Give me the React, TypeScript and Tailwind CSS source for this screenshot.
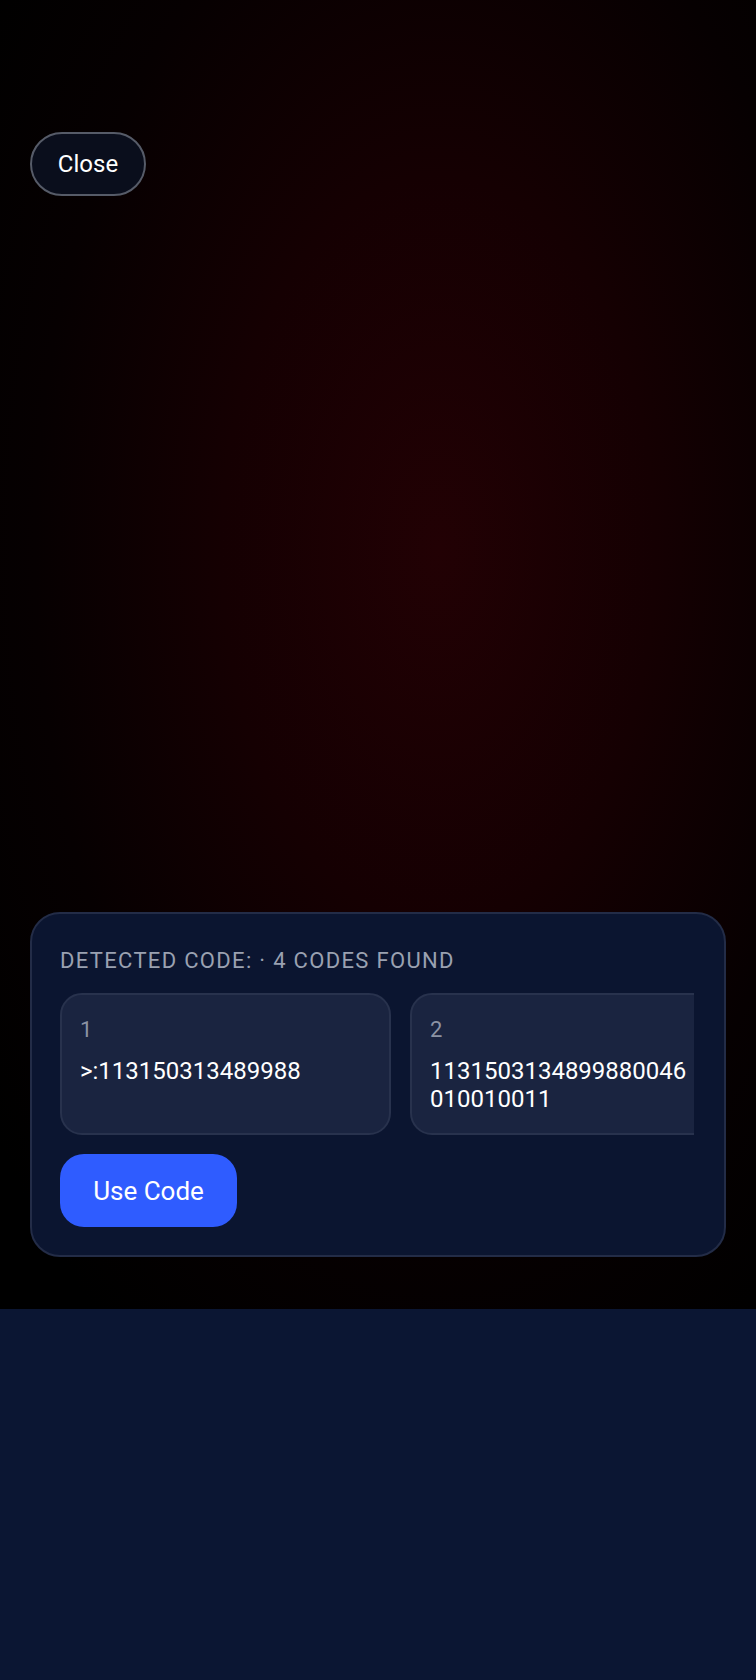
import React from "react";

export default function App() {
  return (
    <div className="w-[756px] h-[1680px] flex flex-col bg-[#0b1633]" style={{ fontFamily: "Roboto, 'Noto Sans', sans-serif" }}>
      <div className="h-[1309px] flex flex-col px-[30px] pt-[132px] pb-[52px] bg-[radial-gradient(ellipse_at_58%_42%,#220104_0%,#150002_35%,#060001_65%,#000000_90%)]">
        <button className="self-start w-[116px] h-[64px] rounded-full border-2 border-[#565b68] bg-[#0a0e1c] text-white text-[24px] leading-none">
          Close
        </button>
        <div className="mt-auto rounded-[30px] border-2 border-[#232c47] bg-[#0b1530] pl-[28px] pr-[30px] pt-[36px] pb-[28px]">
          <div className="text-[22px] leading-none tracking-[0.06em] text-[#9aa1b1]">
            DETECTED CODE: · 4 CODES FOUND
          </div>
          <div className="mt-[21px] flex gap-[19px] overflow-hidden">
            {[
              { n: "1", code: ">:113150313489988" },
              { n: "2", code: "1131503134899880046010010011" },
            ].map((t) => (
              <div
                key={t.n}
                className="shrink-0 w-[331px] h-[142px] rounded-[22px] border-2 border-[#28324d] bg-[#1a2440] pl-[18px] pt-[22px]"
              >
                <div className="text-[22px] leading-[26px] text-[#8c93a4]">{t.n}</div>
                <div className="mt-[14px] w-[262px] break-all text-[24px] leading-[28px] text-white">{t.code}</div>
              </div>
            ))}
          </div>
          <button className="mt-[19px] w-[177px] h-[73px] rounded-[24px] bg-[#2f5cff] text-white text-[26px] leading-none">
            Use Code
          </button>
        </div>
      </div>
      <div className="flex-1 bg-[#0b1633]" />
    </div>
  );
}
